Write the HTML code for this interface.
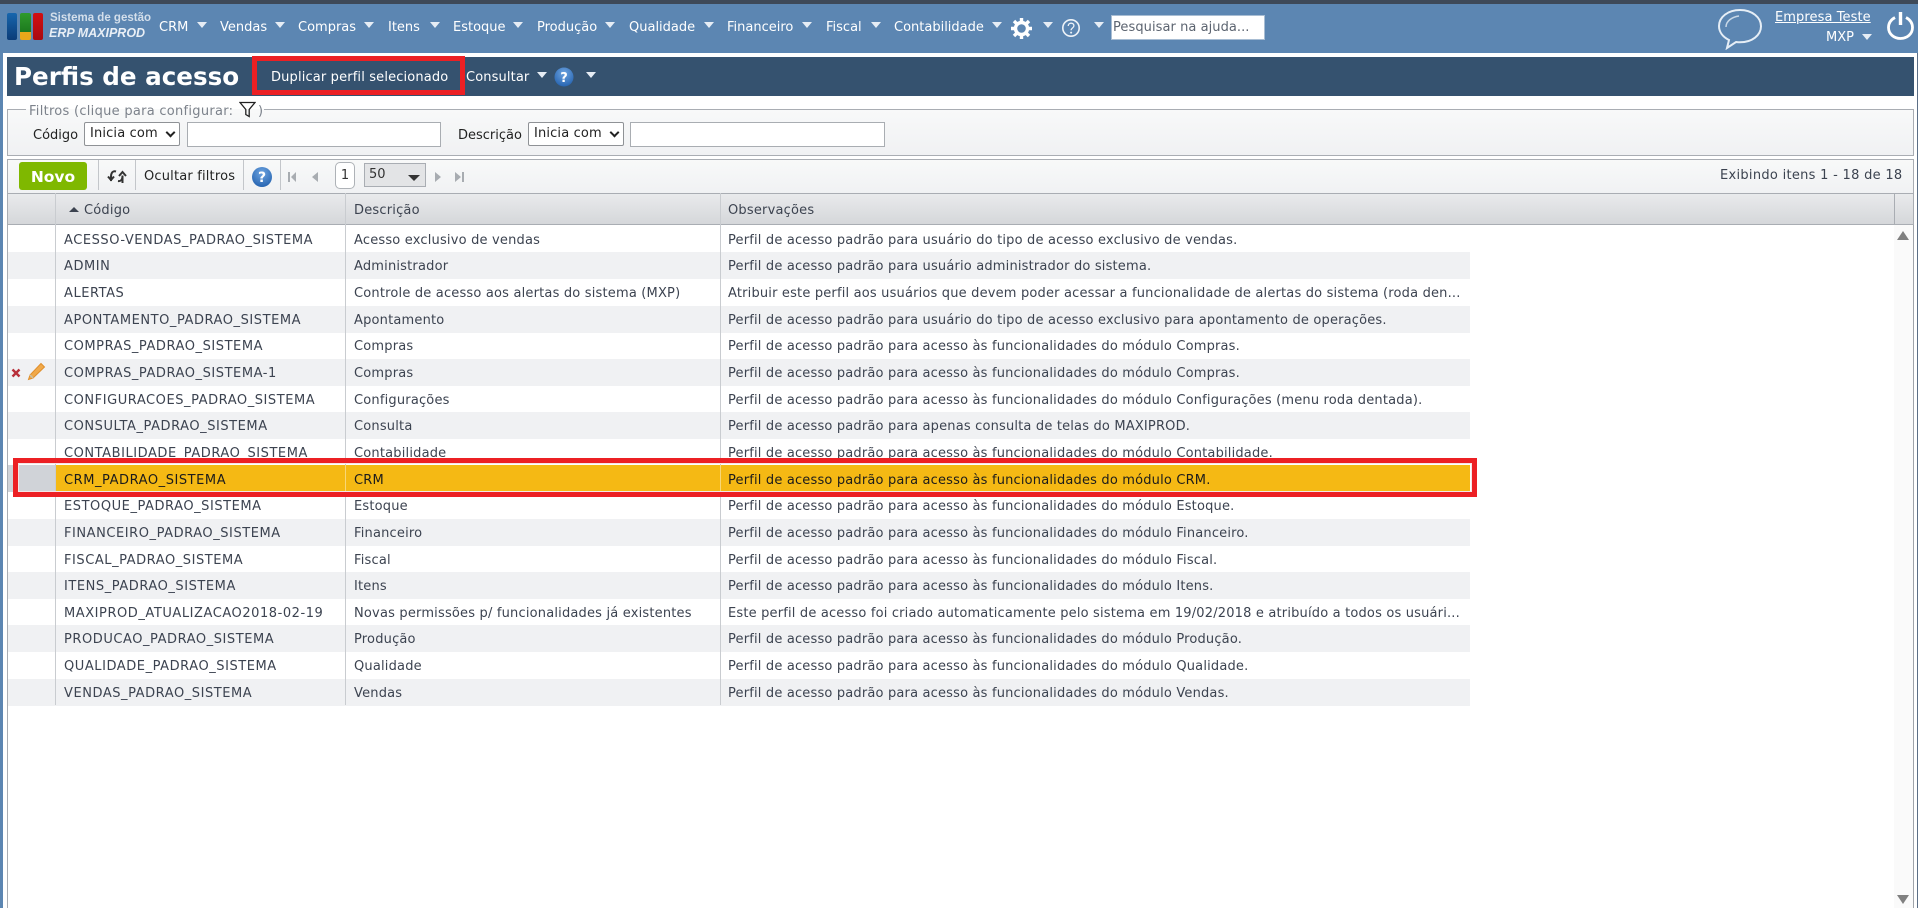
<!DOCTYPE html>
<html lang="pt">
<head>
<meta charset="utf-8">
<title>Perfis de acesso</title>
<style>
html,body{margin:0;padding:0;width:1918px;height:908px;overflow:hidden;background:#fff}
body{position:relative;font-family:"DejaVu Sans","Liberation Sans",sans-serif;font-size:13px;color:#3c4350}
.p{position:absolute}
.t{position:absolute;white-space:nowrap;line-height:20px;height:20px}
.m{color:#fff;top:18px}
.c{position:absolute;width:0;height:0;border-left:5px solid transparent;border-right:5px solid transparent;border-top:6px solid #e6edf5;top:22px}
.s{position:absolute;top:160px;height:30px;width:1px;background:#c3c6ca}
.r{position:absolute;left:8px;width:1462px;height:27px;line-height:26px}
.r.o{background:#f0f1f3}
.r span{position:absolute;white-space:nowrap;top:2px}
.a{left:56px;letter-spacing:.55px}.b{left:346px;letter-spacing:.19px}.d{left:720px;letter-spacing:.18px}
.v{position:absolute;width:1px;top:193px;background:#c9ccd0}
.sel{position:absolute;border:1px solid #8f9296;background:#fff;border-radius:2px;height:22px;line-height:22px;padding-left:5px;box-sizing:border-box;color:#222;letter-spacing:.15px}
.inp{position:absolute;background:#fff;border:1px solid #a9adb2;box-sizing:border-box}
.sel:after{content:"";position:absolute;right:5px;top:6px;width:5px;height:5px;border-right:2px solid #222;border-bottom:2px solid #222;transform:rotate(45deg)}
.red{position:absolute;border:5px solid #ec2024;box-sizing:border-box}
</style>
</head>
<body>
<!-- top bar -->
<div class="p" style="left:0;top:0;width:1918px;height:4px;background:#3e4958"></div>
<div class="p" style="left:0;top:4px;width:1918px;height:49px;background:#5c86b2"></div>
<!-- side strips -->
<div class="p" style="left:0;top:53px;width:3px;height:855px;background:#5c86b2"></div>
<div class="p" style="left:7px;top:193px;width:1px;height:715px;background:#a9adb3"></div>
<div class="p" style="left:1913px;top:193px;width:1px;height:715px;background:#a0a4aa"></div>
<div class="p" style="left:1917px;top:53px;width:1px;height:855px;background:#5c6f86"></div>

<!-- logo -->
<div class="p" style="left:7px;top:13px;width:10px;height:27px;background:linear-gradient(#1766ad,#0b3c78);border-radius:2px"></div>
<div class="p" style="left:20px;top:13px;width:11px;height:19px;background:linear-gradient(#2f9a2c,#1d7a1e);border-radius:2px 2px 0 0"></div>
<div class="p" style="left:20px;top:32px;width:11px;height:8px;background:#e9a81a;border-radius:0 0 2px 2px"></div>
<div class="p" style="left:33px;top:13px;width:10px;height:27px;background:linear-gradient(#d20f12,#a80a10);border-radius:2px"></div>
<div class="t" style="left:50px;top:8px;font-size:11.5px;font-weight:bold;color:#d4dfeb;font-family:'Liberation Sans',sans-serif">Sistema de gestão</div>
<div class="t" style="left:49px;top:23px;font-size:12.5px;font-style:italic;font-weight:bold;color:#e9eff6;font-family:'Liberation Sans',sans-serif">ERP MAXIPROD</div>

<!-- menu -->
<div class="t m" style="left:159px">CRM</div><div class="c" style="left:197px"></div>
<div class="t m" style="left:220px">Vendas</div><div class="c" style="left:275px"></div>
<div class="t m" style="left:298px">Compras</div><div class="c" style="left:364px"></div>
<div class="t m" style="left:388px">Itens</div><div class="c" style="left:430px"></div>
<div class="t m" style="left:453px">Estoque</div><div class="c" style="left:513px"></div>
<div class="t m" style="left:537px">Produção</div><div class="c" style="left:605px"></div>
<div class="t m" style="left:629px">Qualidade</div><div class="c" style="left:704px"></div>
<div class="t m" style="left:727px">Financeiro</div><div class="c" style="left:802px"></div>
<div class="t m" style="left:826px">Fiscal</div><div class="c" style="left:871px"></div>
<div class="t m" style="left:894px">Contabilidade</div><div class="c" style="left:992px"></div>
<svg class="p" style="left:1011px;top:18px" width="21" height="21" viewBox="0 0 21 21"><circle cx="10.5" cy="10.5" r="6" fill="none" stroke="#fff" stroke-width="3.4"/><g stroke="#fff" stroke-width="3.4"><path d="M10.5 0v4M10.5 17v4M0 10.5h4M17 10.5h4M3 3l3 3M15 15l3 3M18 3l-3 3M6 15l-3 3"/></g></svg>
<div class="c" style="left:1043px"></div>
<svg class="p" style="left:1061px;top:18px" width="20" height="20" viewBox="0 0 20 20"><circle cx="10" cy="10" r="8.2" fill="none" stroke="#eef3f8" stroke-width="1.6"/><path d="M7.2 8c0-1.8 1.3-2.8 2.9-2.8s2.8 1 2.8 2.5c0 2.3-2.8 2.2-2.8 4.5" fill="none" stroke="#eef3f8" stroke-width="1.3"/><circle cx="10.1" cy="14.6" r="1" fill="#eef3f8"/></svg>
<div class="c" style="left:1094px"></div>
<div class="p" style="left:1111px;top:15px;width:154px;height:25px;background:#fff;border:1px solid #a8bdd3;box-sizing:border-box"></div>
<div class="t" style="left:1113px;top:18px;color:#5c6470;letter-spacing:.06px">Pesquisar na ajuda...</div>

<!-- right side -->
<svg class="p" style="left:1717px;top:8px" width="46" height="42" viewBox="0 0 46 42"><path d="M23 2C11 2 2 9 2 18c0 6 4 11 10 14l-2 8 9-6c1.500.2 3 .3 4 .3 12 0 21-7 21-16S35 2 23 2z" fill="none" stroke="#e6eef6" stroke-width="2"/><path d="M9 19c0-6 6-10 13-11" fill="none" stroke="#c9d8e7" stroke-width="1.500"/></svg>
<div class="t" style="left:1775px;top:8px;color:#fff;text-decoration:underline;letter-spacing:.08px">Empresa Teste</div>
<div class="t" style="left:1826px;top:28px;color:#fff">MXP</div>
<div class="c" style="left:1862px;top:34px"></div>
<svg class="p" style="left:1886px;top:10px" width="30" height="30" viewBox="0 0 30 30"><path d="M9 7.500C4.800 9.800 2.500 13.600 2.500 17.500c0 6.500 5.500 11 12 11s12-4.500 12-11c0-3.900-2.300-7.700-6.500-10" fill="none" stroke="#fff" stroke-width="2.800"/><path d="M14.500 2v13" stroke="#fff" stroke-width="3.400"/></svg>

<!-- title bar -->
<div class="p" style="left:7px;top:57px;width:1907px;height:39px;background:#35526f"></div>
<div class="t" style="left:14px;top:62px;height:30px;line-height:30px;font-size:24.6px;font-weight:bold;color:#fff">Perfis de acesso</div>
<div class="t" style="left:271px;top:68px;color:#fff;letter-spacing:.15px">Duplicar perfil selecionado</div>
<div class="red" style="left:252px;top:56px;width:213px;height:39px"></div>
<div class="t" style="left:466px;top:68px;color:#fff;letter-spacing:.12px">Consultar</div>
<div class="c" style="left:537px;top:72px"></div>
<svg class="p" style="left:554px;top:67px" width="20" height="20" viewBox="0 0 20 20"><defs><radialGradient id="h1" cx=".5" cy=".3" r=".8"><stop offset="0" stop-color="#6ea4e0"/><stop offset="1" stop-color="#1d5cab"/></radialGradient></defs><circle cx="10" cy="10" r="9.500" fill="url(#h1)"/><text x="10" y="15" text-anchor="middle" font-family="DejaVu Sans" font-weight="bold" font-size="13" fill="#fff">?</text></svg>
<div class="c" style="left:586px;top:72px"></div>

<!-- filters -->
<div class="p" style="left:7px;top:109px;width:1907px;height:47px;box-sizing:border-box;border:1px solid #a9adb3;background:linear-gradient(#f8f9f9,#f0f1f3)"></div>
<div class="p" style="left:26px;top:105px;width:238px;height:8px;background:linear-gradient(#fff 50%,#f8f9f9 50%)"></div>
<div class="t" style="left:29px;top:102px;color:#7c828b;letter-spacing:.28px">Filtros (clique para configurar:</div>
<svg class="p" style="left:239px;top:101px" width="17" height="17" viewBox="0 0 17 17"><path d="M1 1.500h15l-5.800 7v7l-3.400-2v-5z" fill="none" stroke="#222" stroke-width="1.300"/></svg>
<div class="t" style="left:258px;top:102px;color:#7c828b">)</div>
<div class="t" style="left:33px;top:126px;color:#222">Código</div>
<div class="sel" style="left:84px;top:122px;width:96px;height:24px">Inicia com</div>
<div class="inp" style="left:187px;top:122px;width:254px;height:25px"></div>
<div class="t" style="left:458px;top:126px;color:#222">Descrição</div>
<div class="sel" style="left:528px;top:122px;width:96px;height:24px">Inicia com</div>
<div class="inp" style="left:630px;top:122px;width:255px;height:25px"></div>

<!-- toolbar -->
<div class="p" style="left:7px;top:159px;width:1907px;height:35px;box-sizing:border-box;border:1px solid #a9adb3;border-bottom:0;background:linear-gradient(#f8f9f9,#f0f1f3)"></div>
<div class="p" style="left:19px;top:162px;width:68px;height:28px;background:#7fb800;border-radius:3px;color:#fff;font-weight:bold;font-size:15.5px;line-height:30px;text-align:center">Novo</div>
<div class="s" style="left:98px"></div>
<svg class="p" style="left:107px;top:168px" width="20" height="17" viewBox="0 0 20 17"><path d="M9 3.500C6 2.500 4 4.500 4 9v4M1 8.500l3 3.500 3-3.500M11 13c3 .5 4.500-1.500 4.500-5.500V15M12 8l3.500-4 3.500 4" fill="none" stroke="#333" stroke-width="2"/></svg>
<div class="s" style="left:135px"></div>
<div class="t" style="left:144px;top:167px;color:#222;letter-spacing:.18px">Ocultar filtros</div>
<div class="s" style="left:243px"></div>
<svg class="p" style="left:252px;top:167px" width="20" height="20" viewBox="0 0 20 20"><defs><radialGradient id="h2" cx=".5" cy=".3" r=".8"><stop offset="0" stop-color="#6ea4e0"/><stop offset="1" stop-color="#1d5cab"/></radialGradient></defs><circle cx="10" cy="10" r="10" fill="url(#h2)"/><text x="10" y="15" text-anchor="middle" font-family="DejaVu Sans" font-weight="bold" font-size="14" fill="#fff">?</text></svg>
<div class="s" style="left:280px"></div>
<svg class="p" style="left:287px;top:170px" width="180" height="14" viewBox="0 0 180 14" fill="#a8acb1"><path d="M1 2h2v10H1zM9 2v10L4 7zM31 2v10l-6-5zM148 2v10l6-5zM168 2v10l6-5zM175 2h2v10h-2z"/></svg>
<div class="p" style="left:335px;top:162px;width:20px;height:27px;box-sizing:border-box;border:1px solid #aeb2b7;border-radius:5px;background:#fff;text-align:center;line-height:26px;color:#333">1</div>
<div class="p" style="left:364px;top:163px;width:62px;height:24px;box-sizing:border-box;border:1px solid #a9adb3;background:#e3e4e6;line-height:21px;padding-left:4px;color:#333">50</div>
<div class="p" style="left:408px;top:175px;border-left:6px solid transparent;border-right:6px solid transparent;border-top:6px solid #333"></div>
<div class="t" style="left:1720px;top:166px;color:#3c4350;letter-spacing:.29px">Exibindo itens 1 - 18 de 18</div>

<!-- header -->
<div class="p" style="left:7px;top:193px;width:1907px;height:32px;box-sizing:border-box;border:1px solid #a9adb3;background:linear-gradient(#e9eaec,#d5d7da)"></div>
<div class="p" style="left:69px;top:207px;border-left:5px solid transparent;border-right:5px solid transparent;border-bottom:5px solid #3c4350"></div>
<div class="t" style="left:84px;top:201px;letter-spacing:.2px">Código</div>
<div class="t" style="left:354px;top:201px;letter-spacing:.2px">Descrição</div>
<div class="t" style="left:728px;top:201px;letter-spacing:.2px">Observações</div>
<div class="v" style="left:1894px;height:32px;background:#a9adb3"></div>

<!-- scrollbar -->
<div class="p" style="left:1894px;top:225px;width:19px;height:683px;background:#fafafa"></div>
<div class="p" style="left:1897px;top:231px;border-left:6px solid transparent;border-right:6px solid transparent;border-bottom:9px solid #808080"></div>
<div class="p" style="left:1897px;top:895px;border-left:6px solid transparent;border-right:6px solid transparent;border-top:9px solid #808080"></div>

<!-- rows -->
<div class="r" style="top:226px"><span class="a">ACESSO-VENDAS_PADRAO_SISTEMA</span><span class="b">Acesso exclusivo de vendas</span><span class="d">Perfil de acesso padrão para usuário do tipo de acesso exclusivo de vendas.</span></div>
<div class="r o" style="top:252px"><span class="a">ADMIN</span><span class="b">Administrador</span><span class="d">Perfil de acesso padrão para usuário administrador do sistema.</span></div>
<div class="r" style="top:279px"><span class="a">ALERTAS</span><span class="b">Controle de acesso aos alertas do sistema (MXP)</span><span class="d">Atribuir este perfil aos usuários que devem poder acessar a funcionalidade de alertas do sistema (roda den...</span></div>
<div class="r o" style="top:306px"><span class="a">APONTAMENTO_PADRAO_SISTEMA</span><span class="b">Apontamento</span><span class="d">Perfil de acesso padrão para usuário do tipo de acesso exclusivo para apontamento de operações.</span></div>
<div class="r" style="top:332px"><span class="a">COMPRAS_PADRAO_SISTEMA</span><span class="b">Compras</span><span class="d">Perfil de acesso padrão para acesso às funcionalidades do módulo Compras.</span></div>
<div class="r o" style="top:359px"><span class="a">COMPRAS_PADRAO_SISTEMA-1</span><span class="b">Compras</span><span class="d">Perfil de acesso padrão para acesso às funcionalidades do módulo Compras.</span></div>
<div class="r" style="top:386px"><span class="a">CONFIGURACOES_PADRAO_SISTEMA</span><span class="b">Configurações</span><span class="d">Perfil de acesso padrão para acesso às funcionalidades do módulo Configurações (menu roda dentada).</span></div>
<div class="r o" style="top:412px"><span class="a">CONSULTA_PADRAO_SISTEMA</span><span class="b">Consulta</span><span class="d">Perfil de acesso padrão para apenas consulta de telas do MAXIPROD.</span></div>
<div class="r" style="top:439px"><span class="a">CONTABILIDADE_PADRAO_SISTEMA</span><span class="b">Contabilidade</span><span class="d">Perfil de acesso padrão para acesso às funcionalidades do módulo Contabilidade.</span></div>
<div class="r" style="top:492px"><span class="a">ESTOQUE_PADRAO_SISTEMA</span><span class="b">Estoque</span><span class="d">Perfil de acesso padrão para acesso às funcionalidades do módulo Estoque.</span></div>
<div class="r o" style="top:519px"><span class="a">FINANCEIRO_PADRAO_SISTEMA</span><span class="b">Financeiro</span><span class="d">Perfil de acesso padrão para acesso às funcionalidades do módulo Financeiro.</span></div>
<div class="r" style="top:546px"><span class="a">FISCAL_PADRAO_SISTEMA</span><span class="b">Fiscal</span><span class="d">Perfil de acesso padrão para acesso às funcionalidades do módulo Fiscal.</span></div>
<div class="r o" style="top:572px"><span class="a">ITENS_PADRAO_SISTEMA</span><span class="b">Itens</span><span class="d">Perfil de acesso padrão para acesso às funcionalidades do módulo Itens.</span></div>
<div class="r" style="top:599px"><span class="a">MAXIPROD_ATUALIZACAO2018-02-19</span><span class="b">Novas permissões p/ funcionalidades já existentes</span><span class="d">Este perfil de acesso foi criado automaticamente pelo sistema em 19/02/2018 e atribuído a todos os usuári...</span></div>
<div class="r o" style="top:625px"><span class="a">PRODUCAO_PADRAO_SISTEMA</span><span class="b">Produção</span><span class="d">Perfil de acesso padrão para acesso às funcionalidades do módulo Produção.</span></div>
<div class="r" style="top:652px"><span class="a">QUALIDADE_PADRAO_SISTEMA</span><span class="b">Qualidade</span><span class="d">Perfil de acesso padrão para acesso às funcionalidades do módulo Qualidade.</span></div>
<div class="r o" style="top:679px"><span class="a">VENDAS_PADRAO_SISTEMA</span><span class="b">Vendas</span><span class="d">Perfil de acesso padrão para acesso às funcionalidades do módulo Vendas.</span></div>

<!-- column lines -->
<div class="v" style="left:55px;height:512px;background:#c9ccd0"></div>
<div class="v" style="left:345px;height:512px"></div>
<div class="v" style="left:720px;height:512px"></div>

<!-- selected row -->
<div class="p" style="left:8px;top:465px;width:47px;height:27px;background:#d0d3d8"></div>
<div class="p" style="left:56px;top:465px;width:1414px;height:27px;background:#f5b914;color:#1c1c1c;line-height:27px">
<span class="p" style="left:8px;top:2px;white-space:nowrap;letter-spacing:.55px">CRM_PADRAO_SISTEMA</span>
<span class="p" style="left:298px;top:2px;white-space:nowrap;letter-spacing:.17px">CRM</span>
<span class="p" style="left:672px;top:2px;white-space:nowrap;letter-spacing:.18px">Perfil de acesso padrão para acesso às funcionalidades do módulo CRM.</span>
</div>
<div class="p" style="left:345px;top:465px;width:1px;height:27px;background:#f8d777"></div>
<div class="p" style="left:720px;top:465px;width:1px;height:27px;background:#f8d777"></div>
<div class="red" style="left:13px;top:458px;width:1464px;height:39px"></div>
<div class="p" style="left:18px;top:463px;width:1454px;height:29px;box-sizing:border-box;border:1px solid #f3e6e6"></div>

<!-- row icons -->
<svg class="p" style="left:11px;top:368px" width="10" height="10" viewBox="0 0 10 10"><path d="M1.500 1.500l7 7M8.500 1.500l-7 7" stroke="#b8303a" stroke-width="2.400"/></svg>
<svg class="p" style="left:27px;top:362px" width="19" height="19" viewBox="0 0 19 19"><path d="M14 1.500l3.500 3.500L6 16l-4.500 1.500L3 13z" fill="#f0a94a" stroke="#e08f2c" stroke-width="1"/><path d="M3 13l3 3" stroke="#c9c2a8" stroke-width="1.500"/></svg>
</body>
</html>
